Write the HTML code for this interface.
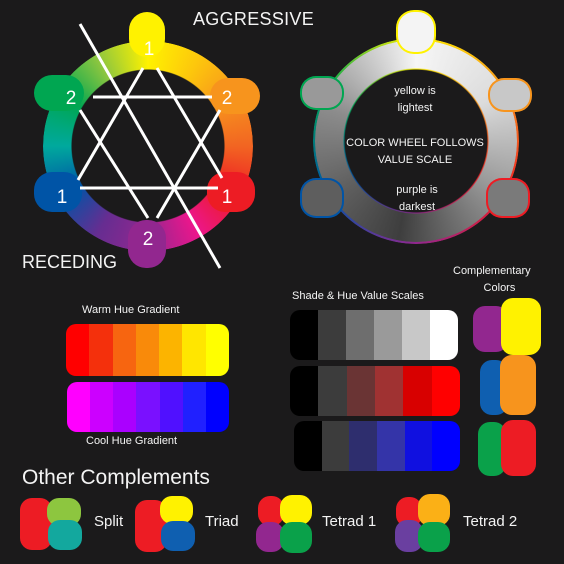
<!DOCTYPE html>
<html><head><meta charset="utf-8"><style>
*{margin:0;padding:0;box-sizing:border-box}
body{width:564px;height:564px;background:#1b1a1b;position:relative;overflow:hidden;font-family:"Liberation Sans",sans-serif;color:#fff}
.a{position:absolute}
.ring{position:absolute;border-radius:50%}
.b{position:absolute;border-radius:12px}
.t{position:absolute;white-space:nowrap;color:#f4f4f4}
</style></head><body>

<!-- wheel 1 -->
<div class="ring" style="left:43px;top:41px;width:210px;height:210px;background:conic-gradient(#fff200 0deg,#fdc70c 30deg,#f7941d 60deg,#f26522 90deg,#ed1c24 120deg,#ec168c 150deg,#92278f 180deg,#662d91 210deg,#0054a6 240deg,#00a99d 270deg,#00a651 300deg,#8dc63f 330deg,#fff200 360deg);-webkit-mask:radial-gradient(circle,transparent 76px,#000 77px);mask:radial-gradient(circle,transparent 76px,#000 77px)"></div>
<div class="b" style="left:129px;top:12px;width:36px;height:45px;background:#fff200;border-radius:18px"></div>
<div class="b" style="left:210px;top:78px;width:50px;height:36px;background:#f7941d;border-radius:18px"></div>
<div class="b" style="left:207px;top:172px;width:48px;height:40px;background:#ed1c24;border-radius:18px"></div>
<div class="b" style="left:128px;top:220px;width:38px;height:48px;background:#92278f;border-radius:18px"></div>
<div class="b" style="left:34px;top:172px;width:48px;height:40px;background:#0054a6;border-radius:18px"></div>
<div class="b" style="left:34px;top:75px;width:50px;height:36px;background:#00a651;border-radius:18px"></div>
<svg class="a" style="left:0;top:0" width="300" height="280">
<g stroke="#fff" stroke-width="3" fill="none">
<line x1="80" y1="24" x2="220" y2="268"/>
<line x1="143" y1="68" x2="78" y2="180"/>
<line x1="157" y1="68" x2="222" y2="178"/>
<line x1="80" y1="188" x2="218" y2="188"/>
<line x1="93" y1="97" x2="212" y2="97"/>
<line x1="80" y1="110" x2="148" y2="218"/>
<line x1="220" y1="110" x2="157" y2="218"/>
</g>
<g fill="#fff" font-family="Liberation Sans" font-size="19" text-anchor="middle">
<text x="149" y="55">1</text><text x="227" y="104">2</text><text x="227" y="203">1</text>
<text x="148" y="245">2</text><text x="62" y="203">1</text><text x="71" y="104">2</text>
</g>
</svg>
<div class="t" style="left:193px;top:9px;font-size:18px;letter-spacing:0.3px">AGGRESSIVE</div>
<div class="t" style="left:22px;top:252px;font-size:18px">RECEDING</div>

<!-- wheel 2 -->
<div class="ring" style="left:313px;top:38px;width:206px;height:206px;background:conic-gradient(#fff200,#f7941d 60deg,#ed1c24 120deg,#92278f 180deg,#0054a6 240deg,#00a651 300deg,#fff200);-webkit-mask:radial-gradient(circle,transparent 71px,#000 72px);mask:radial-gradient(circle,transparent 71px,#000 72px)"></div>
<div class="ring" style="left:315px;top:40px;width:202px;height:202px;background:conic-gradient(#f6f6f6,#dcdcdc 60deg,#9a9a9a 120deg,#5a5a5a 170deg,#3e3e3e 190deg,#626262 240deg,#8c8c8c 290deg,#c8c8c8 330deg,#f6f6f6);-webkit-mask:radial-gradient(circle,transparent 72px,#000 73px);mask:radial-gradient(circle,transparent 72px,#000 73px)"></div>
<div class="b" style="left:398px;top:12px;width:36px;height:40px;background:#f4f4f4;border-radius:16px;box-shadow:0 0 0 2px #fff200"></div>
<div class="b" style="left:490px;top:80px;width:40px;height:30px;background:#c8c8c8;border-radius:14px;box-shadow:0 0 0 2px #f7941d"></div>
<div class="b" style="left:488px;top:180px;width:40px;height:36px;background:#7a7a7a;border-radius:14px;box-shadow:0 0 0 2px #ed1c24"></div>
<div class="b" style="left:302px;top:180px;width:40px;height:36px;background:#5e5e5e;border-radius:14px;box-shadow:0 0 0 2px #0054a6"></div>
<div class="b" style="left:302px;top:78px;width:40px;height:30px;background:#999;border-radius:14px;box-shadow:0 0 0 2px #00a651"></div>
<div class="t" style="left:415px;top:83px;font-size:11px;text-align:center;transform:translateX(-50%);line-height:17px">yellow is<br>lightest</div>
<div class="t" style="left:415px;top:135px;font-size:11px;text-align:center;transform:translateX(-50%);line-height:17px">COLOR WHEEL FOLLOWS<br>VALUE SCALE</div>
<div class="t" style="left:417px;top:182px;font-size:11px;text-align:center;transform:translateX(-50%);line-height:17px">purple is<br>darkest</div>

<!-- warm/cool -->
<div class="t" style="left:82px;top:304px;font-size:11px">Warm Hue Gradient</div>
<div class="a" style="left:66px;top:324px;width:163px;height:52px;display:flex;border-radius:10px;overflow:hidden">
<div style="flex:1;background:#f00"></div><div style="flex:1;background:#f4300c"></div><div style="flex:1;background:#f76510"></div><div style="flex:1;background:#f98a0a"></div><div style="flex:1;background:#fcb400"></div><div style="flex:1;background:#ffe600"></div><div style="flex:1;background:#ff0"></div></div>
<div class="a" style="left:67px;top:382px;width:162px;height:50px;display:flex;border-radius:10px;overflow:hidden">
<div style="flex:1;background:#f0f"></div><div style="flex:1;background:#c0f"></div><div style="flex:1;background:#a0f"></div><div style="flex:1;background:#7a10ff"></div><div style="flex:1;background:#5010ff"></div><div style="flex:1;background:#2020ff"></div><div style="flex:1;background:#00f"></div></div>
<div class="t" style="left:86px;top:435px;font-size:11px">Cool Hue Gradient</div>

<!-- shade scales -->
<div class="t" style="left:292px;top:290px;font-size:11px">Shade &amp; Hue Value Scales</div>
<div class="a" style="left:290px;top:310px;width:168px;height:50px;display:flex;border-radius:10px;overflow:hidden">
<div style="flex:1;background:#000"></div><div style="flex:1;background:#3c3c3c"></div><div style="flex:1;background:#6e6e6e"></div><div style="flex:1;background:#9a9a9a"></div><div style="flex:1;background:#c8c8c8"></div><div style="flex:1;background:#fff"></div></div>
<div class="a" style="left:290px;top:366px;width:170px;height:50px;display:flex;border-radius:10px;overflow:hidden">
<div style="flex:1;background:#000"></div><div style="flex:1;background:#3c3c3c"></div><div style="flex:1;background:#6a3434"></div><div style="flex:1;background:#a03232"></div><div style="flex:1;background:#d80000"></div><div style="flex:1;background:#f00"></div></div>
<div class="a" style="left:294px;top:421px;width:166px;height:50px;display:flex;border-radius:10px;overflow:hidden">
<div style="flex:1;background:#000"></div><div style="flex:1;background:#3c3c3c"></div><div style="flex:1;background:#2e2e6e"></div><div style="flex:1;background:#3434a8"></div><div style="flex:1;background:#1010e0"></div><div style="flex:1;background:#00f"></div></div>

<!-- complementary -->
<div class="t" style="left:453px;top:263px;font-size:11px;text-align:center;line-height:17px">Complementary<br>&nbsp;&nbsp;&nbsp;&nbsp;&nbsp;Colors</div>
<div class="b" style="left:473px;top:306px;width:35px;height:46px;background:#92278f"></div>
<div class="b" style="left:501px;top:298px;width:40px;height:57px;background:#fff200"></div>
<div class="b" style="left:480px;top:360px;width:28px;height:55px;background:#0f5fb0"></div>
<div class="b" style="left:500px;top:355px;width:36px;height:60px;background:#f7941d"></div>
<div class="b" style="left:478px;top:422px;width:28px;height:54px;background:#0aa14a"></div>
<div class="b" style="left:501px;top:420px;width:35px;height:56px;background:#ed1c24"></div>

<!-- other complements -->
<div class="t" style="left:22px;top:466px;font-size:21px">Other Complements</div>
<div class="b" style="left:20px;top:498px;width:32px;height:52px;background:#ed1c24"></div>
<div class="b" style="left:47px;top:498px;width:34px;height:28px;background:#8dc63f"></div>
<div class="b" style="left:48px;top:520px;width:34px;height:30px;background:#13a89e"></div>
<div class="t" style="left:94px;top:513px;font-size:15px">Split</div>
<div class="b" style="left:135px;top:500px;width:32px;height:52px;background:#ed1c24"></div>
<div class="b" style="left:160px;top:496px;width:33px;height:28px;background:#fff200"></div>
<div class="b" style="left:161px;top:521px;width:34px;height:30px;background:#0f5fb0"></div>
<div class="t" style="left:205px;top:513px;font-size:15px">Triad</div>
<div class="b" style="left:258px;top:496px;width:26px;height:30px;background:#ed1c24"></div>
<div class="b" style="left:280px;top:495px;width:32px;height:30px;background:#fff200"></div>
<div class="b" style="left:256px;top:522px;width:28px;height:30px;background:#92278f"></div>
<div class="b" style="left:280px;top:522px;width:32px;height:31px;background:#0aa14a"></div>
<div class="t" style="left:322px;top:513px;font-size:15px">Tetrad 1</div>
<div class="b" style="left:396px;top:497px;width:26px;height:30px;background:#ed1c24"></div>
<div class="b" style="left:418px;top:494px;width:32px;height:32px;background:#fbb016"></div>
<div class="b" style="left:395px;top:520px;width:28px;height:32px;background:#6a3fa0"></div>
<div class="b" style="left:418px;top:522px;width:32px;height:30px;background:#0aa14a"></div>
<div class="t" style="left:463px;top:513px;font-size:15px">Tetrad 2</div>
</body></html>
